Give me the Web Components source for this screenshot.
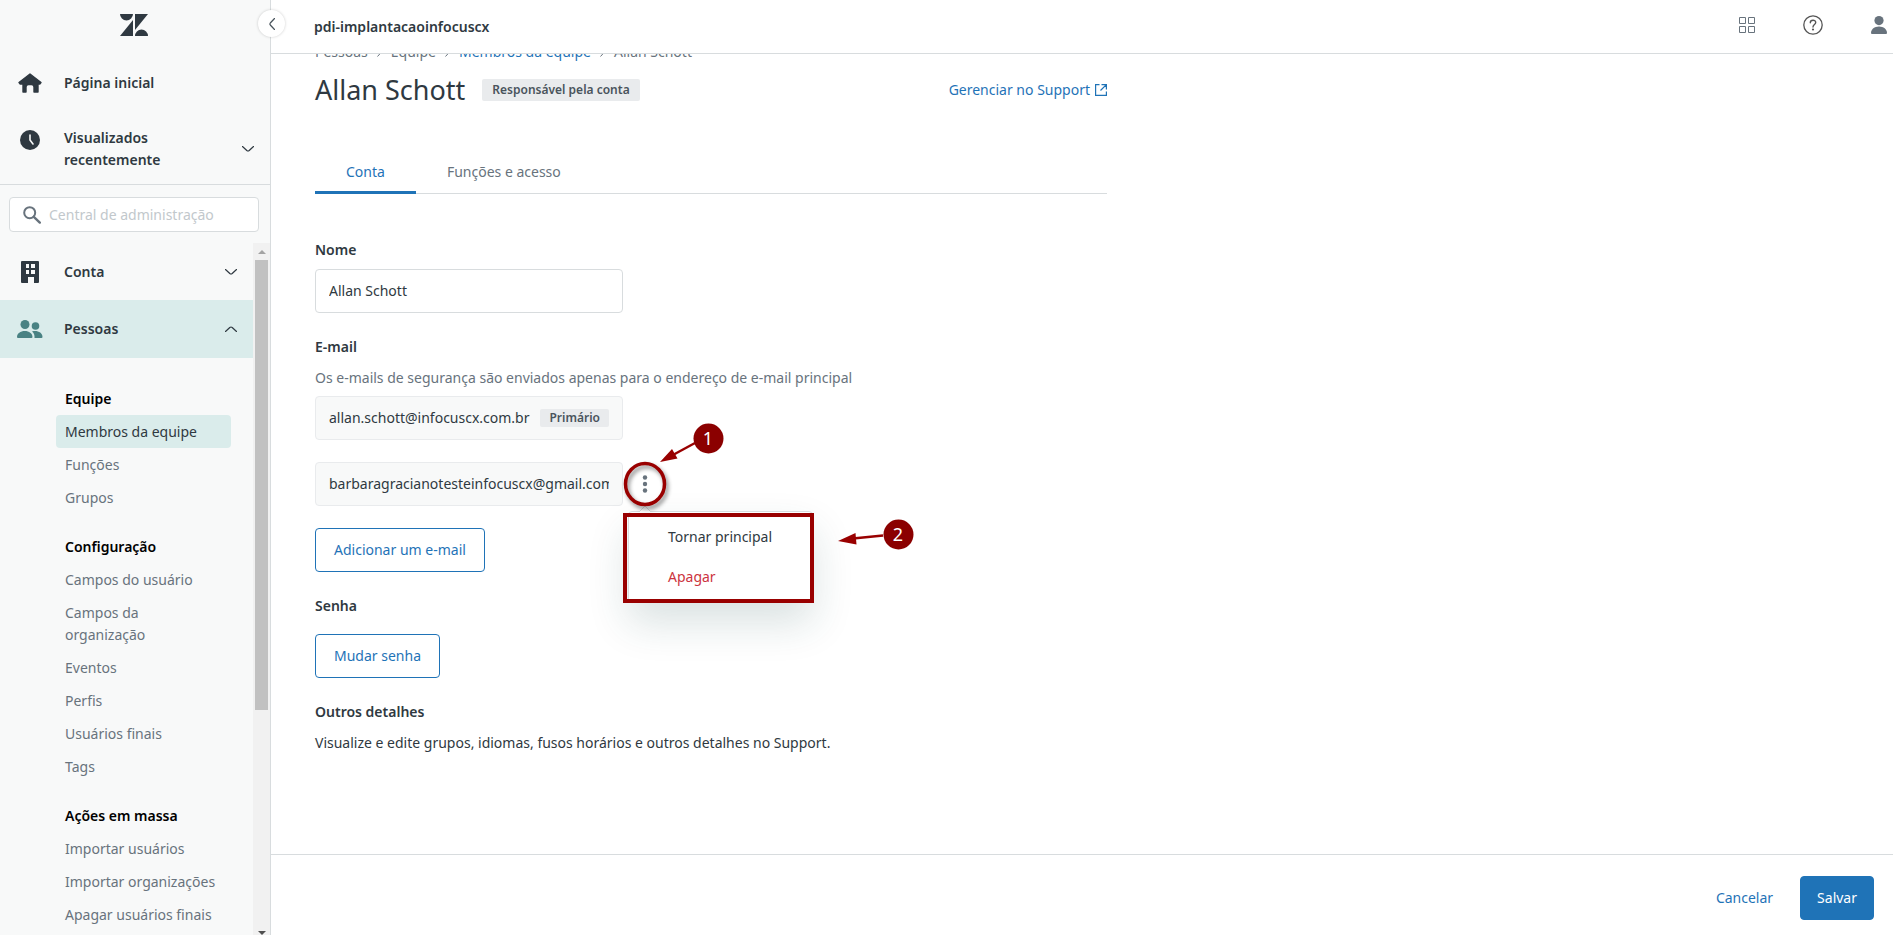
<!DOCTYPE html>
<html lang="pt-BR">
<head>
<meta charset="utf-8">
<title>Allan Schott – Membros da equipe</title>
<style>
  html, body { margin: 0; height: 100%; }
  body {
    font: 14px/22px "Noto Sans", "Open Sans", sans-serif;
    color: #2f3941;
    background: #fff;
    --blue: #1f73b7;
    --grey: #68737d;
    --line: #d8dcde;
    --pale: #f8f9f9;
    --teal: #daeceb;
  }
</style>
</head>
<body>
<admin-app></admin-app>

<script>
const define = (name, html, setup) => {
  const template = document.createElement('template');
  template.innerHTML = `<style>*{box-sizing:border-box} a{color:inherit;text-decoration:none} button,input{font:inherit;color:inherit;margin:0}</style>` + html;
  customElements.define(name, class extends HTMLElement {
    connectedCallback() {
      if (this.shadowRoot) return;
      const root = this.attachShadow({ mode: 'open' });
      root.append(template.content.cloneNode(true));
      if (setup) setup(this, root);
    }
  });
};

/* Icons */
const icons = {
  logo: [28, 22, '<path fill="#2f3941" d="M13 6v16H0zM13 0a6.5 6.5 0 0 1-13 0zM15 22a6.5 6.5 0 0 1 13 0zM15 16V0h13z"/>'],
  home: [24, 20, '<path fill="#2f3941" stroke="#2f3941" stroke-width="1.4" stroke-linejoin="round" d="M12 1 23 9.600 21.800 11H20v8h-4v-5a2.500 2.500 0 0 0-2.500-2.500h-3A2.500 2.500 0 0 0 8 14v5H5v-8H2.200L1 9.600z"/>'],
  clock: [20, 20, '<circle cx="10" cy="10" r="10" fill="#2f3941"/><path d="M10 5v5l3 4" fill="none" stroke="#f8f9f9" stroke-width="1.600" stroke-linecap="round" stroke-linejoin="round"/>'],
  down: [12, 6, '<path d="M.5.500 4.800 4.500Q6 5.500 7.200 4.500L11.500.500" fill="none" stroke="#2f3941" stroke-width="1.200" stroke-linecap="round"/>'],
  up: [12, 6, '<path d="M.5 5.500 4.800 1.500Q6 .500 7.200 1.500L11.500 5.500" fill="none" stroke="#2f3941" stroke-width="1.200" stroke-linecap="round"/>'],
  back: [6, 12, '<path d="M5.500.500 1.300 5Q.500 6 1.300 7L5.500 11.500" fill="none" stroke="#49545c" stroke-width="1.200" stroke-linecap="round"/>'],
  search: [18, 18, '<circle cx="6.700" cy="6.700" r="5.500" fill="none" stroke="#68737d" stroke-width="2"/><path d="m10.800 10.800 6 5.800" stroke="#68737d" stroke-width="2.400" stroke-linecap="round"/>'],
  building: [18, 22, '<path fill="#2f3941" fill-rule="evenodd" d="M1 0h16a1 1 0 0 1 1 1v20a1 1 0 0 1-1 1h-4v-6H7v6H1a1 1 0 0 1-1-1V1a1 1 0 0 1 1-1zM5 3v4h3V3zm5 0v4h4V3zM5 9v4h3V9zm5 0v4h4V9z"/>'],
  people: [26, 18, '<g fill="#498283"><circle cx="8" cy="4.500" r="4.500"/><circle cx="18.500" cy="6" r="3.800"/><path d="M1 18a1 1 0 0 1-1-1c0-3.500 3.500-6 7.800-6s7.700 2.500 7.700 6a1 1 0 0 1-1 1zM15 11.600c5-1.600 10.500 1 10.500 5.400a1 1 0 0 1-1 1H17.500c.3-2.500-.5-4.800-2.500-6.400z"/></g>'],
  grid: [16, 16, '<path fill="none" stroke="#68737d" d="M.5.500h6v6h-6zM9.500.500h6v6h-6zM.5 9.500h6v6h-6zM9.500 9.500h6v6h-6z"/>'],
  help: [20, 20, '<circle cx="10" cy="10" r="9.200" fill="none" stroke="#555" stroke-width="1.300"/><path d="M7.300 7.700C7.300 4.300 12.800 4.400 12.700 7.600 12.700 9.500 10 9.700 10 12" fill="none" stroke="#555" stroke-width="1.400" stroke-linecap="round"/><circle cx="10" cy="14.500" r="1.100" fill="#555"/>'],
  user: [16, 18, '<g fill="#68737d"><circle cx="8" cy="4.600" r="4.600"/><path d="M1 18a1 1 0 0 1-1-1c0-3.600 3.500-6.400 8-6.400s8 2.800 8 6.400a1 1 0 0 1-1 1z"/></g>'],
  external: [12, 12, '<path fill="none" stroke="#1f73b7" stroke-width="1.200" d="M4.500.600H.600v10.800h10.800V7.500M6.500.600h4.900v4.900M11.400.600 5.500 6.500"/>'],
  dots: [6, 18, '<g fill="#68737d"><circle cx="3" cy="2.500" r="2.200"/><circle cx="3" cy="9" r="2.200"/><circle cx="3" cy="15.500" r="2.200"/></g>'],
  crumb: [5, 10, '<path d="m.5 .5 4 4.500-4 4.500" fill="none" stroke="#68737d"/>']
};
define('ui-icon', `<style>:host{display:inline-flex;flex:none}svg{display:block}</style>`, (el, root) => {
  const [w, h, body] = icons[el.getAttribute('name')];
  root.innerHTML += `<svg width="${w}" height="${h}" viewBox="0 0 ${w} ${h}" aria-hidden="true">${body}</svg>`;
});

define('ui-badge', `<style>
  :host{display:inline-flex;align-items:center;justify-content:center;background:#e9ebed;border-radius:2px;color:#49545c;font-size:12px;font-weight:600;line-height:18px;padding:0 9px}
  :host([large]){line-height:22px;padding:0 10px}
</style><slot></slot>`);

define('ui-button', `<style>
  :host{display:inline-block}
  button{display:block;height:44px;padding:0 18px;border:1px solid var(--blue);border-radius:4px;background:#fff;color:var(--blue);white-space:nowrap}
  :host([primary]) button{padding:0 16px;background:var(--blue);color:#fff}
  :host([basic]) button{padding:0 16px;border-color:transparent;background:transparent}
</style><button type="button"><slot></slot></button>`);

define('nav-row', `<style>
  :host{display:block}
  a{display:grid;grid-template-columns:32px 1fr auto;column-gap:18px;align-items:center;min-height:57px;padding:0 16px 0 14px;font-weight:600}
  :host([active]) a{background:var(--teal);min-height:58px}
  :host([tall]) a{padding-top:16px;padding-bottom:13px}
  :host([tall]) .lead{align-self:start;padding-top:3px}
  .lead{display:flex;justify-content:center}
</style><a href="#"><span class="lead"><slot name="icon"></slot></span><span><slot></slot></span><slot name="end"></slot></a>`);

define('nav-group', `<style>
  :host{display:block}
  h3{margin:0;padding:5px 9px;font-size:inherit;line-height:22px;font-weight:600;color:#000}
</style><h3></h3><slot></slot>`, (el, root) => { root.querySelector('h3').textContent = el.getAttribute('heading'); });

define('nav-link', `<style>
  :host{display:block;color:var(--grey)}
  a{display:block;padding:6px 9px 5px;border-radius:4px}
  :host([current]) a{background:var(--teal);color:#2f3941}
</style><a href="#"><slot></slot></a>`);

define('scroll-track', `<style>
  :host{display:flex;flex-direction:column;align-items:center;width:17px;background:#f1f1f1}
  i{width:0;height:0;border:4px solid transparent}
  .up{margin:3px 0 6px;border-bottom-color:#a3a3a3}
  .thumb{width:13px;flex:0 0 65%;background:#c1c1c1}
  .down{margin-top:auto;margin-bottom:-4px;border-top-color:#505050}
</style><i class="up"></i><div class="thumb"></div><i class="down"></i>`);

define('side-bar', `<style>
  :host{display:flex;flex-direction:column;position:relative;min-height:0;background:var(--pale);border-right:1px solid var(--line)}
  .logo{display:flex;justify-content:center;padding:14px 22px 18px 20px}
  .top{border-bottom:1px solid var(--line)}
  label{display:flex;align-items:center;gap:8px;margin:12px 11px 11px 9px;height:35px;padding:0 13px;background:#fff;border:1px solid var(--line);border-radius:4px}
  input{border:0;outline:0;padding:0;min-width:0;flex:1;background:none}
  input::placeholder{color:#c2c8cc;opacity:1}
  .scroll{display:grid;grid-template-columns:1fr 17px;flex:1;min-height:0}
  nav{overflow:hidden;min-height:0}
  .groups{display:grid;gap:17px;padding:25px 22px 0 56px}
  .toggle{position:absolute;right:-15px;top:10px;width:27px;height:27px;border:0;border-radius:50%;padding:0;background:#fff;box-shadow:0 0 3px #0003;display:flex;align-items:center;justify-content:center}
</style>
<div class="logo"><ui-icon name="logo"></ui-icon></div>
<div class="top">
  <nav-row><ui-icon slot="icon" name="home"></ui-icon>Página inicial</nav-row>
  <nav-row tall><ui-icon slot="icon" name="clock"></ui-icon>Visualizados recentemente<ui-icon slot="end" name="down"></ui-icon></nav-row>
</div>
<label><ui-icon name="search"></ui-icon><input type="search" placeholder="Central de administração" aria-label="Central de administração"></label>
<div class="scroll">
  <nav aria-label="Administração">
    <nav-row><ui-icon slot="icon" name="building"></ui-icon>Conta<ui-icon slot="end" name="down"></ui-icon></nav-row>
    <nav-row active><ui-icon slot="icon" name="people"></ui-icon>Pessoas<ui-icon slot="end" name="up"></ui-icon></nav-row>
    <div class="groups">
      <nav-group heading="Equipe">
        <nav-link current>Membros da equipe</nav-link><nav-link>Funções</nav-link><nav-link>Grupos</nav-link>
      </nav-group>
      <nav-group heading="Configuração">
        <nav-link>Campos do usuário</nav-link><nav-link>Campos da organização</nav-link><nav-link>Eventos</nav-link><nav-link>Perfis</nav-link><nav-link>Usuários finais</nav-link><nav-link>Tags</nav-link>
      </nav-group>
      <nav-group heading="Ações em massa">
        <nav-link>Importar usuários</nav-link><nav-link>Importar organizações</nav-link><nav-link>Apagar usuários finais</nav-link>
      </nav-group>
    </div>
  </nav>
  <scroll-track></scroll-track>
</div>
<button class="toggle" type="button" aria-label="Recolher"><ui-icon name="back"></ui-icon></button>`);

define('top-bar', `<style>
  :host{display:flex;align-items:center;justify-content:space-between;height:54px;padding:0 6px 0 43px;background:#fff;border-bottom:1px solid var(--line);font-weight:600}
  div{display:flex;align-items:center;gap:48px;padding-bottom:4px}
  button{display:flex;padding:0;border:0;background:none}
</style><span><slot></slot></span>
<div><button type="button" aria-label="Produtos"><ui-icon name="grid"></ui-icon></button><button type="button" aria-label="Ajuda"><ui-icon name="help"></ui-icon></button><button type="button" aria-label="Perfil"><ui-icon name="user"></ui-icon></button></div>`);

define('bread-crumbs', `<style>
  :host{display:flex;align-items:center;gap:9px;color:var(--grey)}
  a{color:var(--blue)}
</style><span>Pessoas</span><ui-icon name="crumb"></ui-icon><span>Equipe</span><ui-icon name="crumb"></ui-icon><a href="#">Membros da equipe</a><ui-icon name="crumb"></ui-icon><span>Allan Schott</span>`);

define('page-title', `<style>
  :host{display:flex;align-items:center;gap:17px}
  h1{margin:0;font-size:27px;line-height:36px;font-weight:400}
  a{display:flex;align-items:center;gap:5px;margin-left:auto;color:var(--blue)}
</style><h1><slot></slot></h1><ui-badge large>Responsável pela conta</ui-badge><a href="#">Gerenciar no Support<ui-icon name="external"></ui-icon></a>`);

define('tab-list', `<style>
  :host{display:flex;border-bottom:1px solid var(--line)}
  button{height:41px;margin-bottom:-1px;padding:0 31px;border:0;border-bottom:3px solid transparent;background:none;color:var(--grey)}
  [aria-selected=true]{color:var(--blue);border-color:var(--blue)}
</style><button type="button" role="tab" aria-selected="true">Conta</button><button type="button" role="tab" aria-selected="false">Funções e acesso</button>`, el => el.setAttribute('role', 'tablist'));

define('form-section', `<style>
  :host{display:block}
  h2{margin:0;font-size:inherit;line-height:22px;font-weight:600}
</style><h2></h2><slot></slot>`, (el, root) => { root.querySelector('h2').textContent = el.getAttribute('heading'); });

define('text-field', `<style>
  :host{display:block;width:308px}
  div{display:flex;align-items:center;gap:8px;height:44px;padding:0 13px;border:1px solid var(--line);border-radius:4px}
  :host([locked]) div{background:var(--pale);border-color:#e9ebed}
  input{flex:1;min-width:0;padding:0;border:0;outline:0;background:none}
</style><div><input type="text"><slot></slot></div>`, (el, root) => {
  const input = root.querySelector('input');
  input.value = el.getAttribute('value');
  input.readOnly = el.hasAttribute('locked');
  input.setAttribute('aria-label', el.getAttribute('label'));
});

define('action-menu', `<style>
  :host{display:block;width:185px;padding:5px 0;background:#fff;border:1px solid var(--line);border-radius:4px;box-shadow:0 20px 40px 0 rgba(23,73,77,.16)}
  button{display:block;width:100%;padding:9px 39px;border:0;background:none;text-align:left}
  .danger{color:#cc3340}
</style><button type="button" role="menuitem">Tornar principal</button><button type="button" role="menuitem" class="danger">Apagar</button>`, el => el.setAttribute('role', 'menu'));

/* Numbered call-outs drawn over the e-mail row and its menu */
define('call-outs', `<style>
  :host{display:block;pointer-events:none}
  svg{display:block;overflow:visible}
  text{fill:#fff;font:18px/1 "Noto Sans",sans-serif;text-anchor:middle}
  .soft{filter:drop-shadow(2px 3px 2px #0007)}
</style>
<svg width="300" height="190" viewBox="0 0 300 190">
  <path d="m16 92 6-6 6 6" fill="#fff" stroke="#d8dcde"/>
  <ellipse class="soft" cx="22" cy="64" rx="19.500" ry="20.500" fill="none" stroke="#900" stroke-width="3.500"/>
  <rect x="2" y="95" width="187" height="86" fill="none" stroke="#900" stroke-width="4"/>
  <g stroke="#900" stroke-width="2.500"><path d="M72 23 48 36"/><path d="M260 115.500 230 118.500"/></g>
  <g fill="#900"><path d="m37 42 12-13 5.500 9.500zM215 121l17.500-8 1 11.500z"/></g>
  <g fill="#8b0000"><circle cx="85.500" cy="18.500" r="15"/><circle cx="275.500" cy="114.500" r="15"/></g>
  <text x="85" y="25">1</text><text x="275" y="121">2</text>
</svg>`);

define('email-row', `<style>
  :host{display:flex;align-items:center;position:relative}
  .more{display:flex;align-items:center;justify-content:center;width:44px;height:44px;padding:0;border:0;background:none}
  action-menu{position:absolute;left:313px;top:49px}
  call-outs{position:absolute;left:308px;top:-42px}
</style>
<text-field locked label="E-mail secundário" value="barbaragracianotesteinfocuscx@gmail.com"></text-field>
<button class="more" type="button" aria-label="Opções"><ui-icon name="dots"></ui-icon></button>
<action-menu></action-menu><call-outs></call-outs>`);

define('account-page', `<style>
  :host{display:block;overflow:hidden;min-height:0;padding:0 44px}
  .body{max-width:792px;margin-top:-13px}
  page-title{margin-top:9px}
  tab-list{margin-top:45px}
  form{display:grid;gap:23px;margin-top:45px}
  .field{margin-top:8px}
  p{margin:0}
  .hint{margin-top:9px;color:var(--grey)}
  .note{margin-top:9px}
  .row{margin-top:7px}
  .next{margin-top:22px}
  .password{margin-top:17px}
</style>
<div class="body">
  <bread-crumbs></bread-crumbs>
  <page-title>Allan Schott</page-title>
  <tab-list></tab-list>
  <form>
    <form-section heading="Nome"><text-field class="field" label="Nome" value="Allan Schott"></text-field></form-section>
    <form-section heading="E-mail">
      <p class="hint">Os e-mails de segurança são enviados apenas para o endereço de e-mail principal</p>
      <text-field class="row" locked label="E-mail" value="allan.schott@infocuscx.com.br"><ui-badge>Primário</ui-badge></text-field>
      <email-row class="next"></email-row>
      <ui-button class="next">Adicionar um e-mail</ui-button>
    </form-section>
    <form-section heading="Senha"><ui-button class="password">Mudar senha</ui-button></form-section>
    <form-section heading="Outros detalhes"><p class="note">Visualize e edite grupos, idiomas, fusos horários e outros detalhes no Support.</p></form-section>
  </form>
</div>`);

define('form-footer', `<style>
  :host{display:flex;align-items:center;justify-content:flex-end;gap:10px;height:81px;padding:5px 19px 0 0;border-top:1px solid var(--line)}
</style><ui-button basic>Cancelar</ui-button><ui-button primary>Salvar</ui-button>`);

define('admin-app', `<style>
  :host{display:grid;grid-template-columns:271px 1fr;height:100vh;overflow:hidden}
  side-bar{z-index:1}
  main{display:grid;grid-template-rows:auto 1fr auto;min-width:0;min-height:0}
</style>
<side-bar></side-bar>
<main><top-bar>pdi-implantacaoinfocuscx</top-bar><account-page></account-page><form-footer></form-footer></main>`);
</script>
</body>
</html>
